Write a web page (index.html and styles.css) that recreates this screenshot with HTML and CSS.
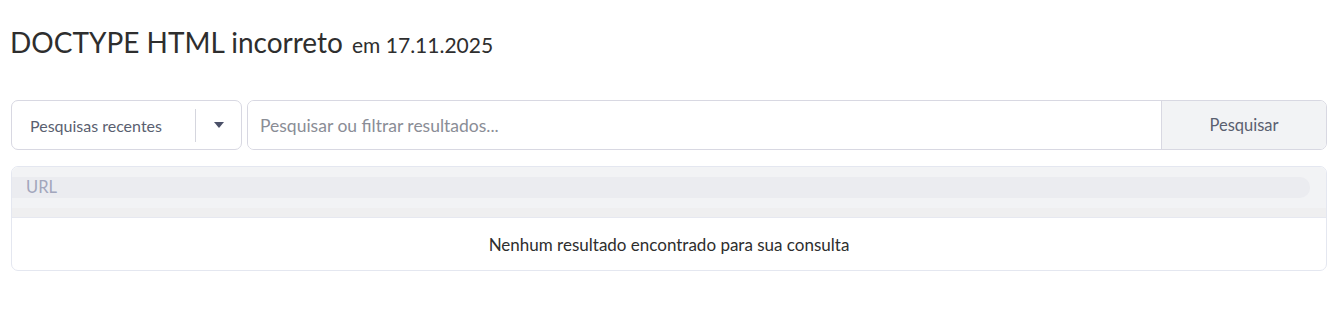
FILE: index.html
```html
<!DOCTYPE html>
<html lang="pt">
<head>
<meta charset="utf-8">
<title>DOCTYPE HTML incorreto</title>
<link rel="stylesheet" href="styles.css">
</head>
<body>
<div class="page">
  <h1 class="title">DOCTYPE HTML incorreto <span class="date">em 17.11.2025</span></h1>
  <div class="search-row">
    <div class="recent">
      <span class="recent-label">Pesquisas recentes</span>
      <span class="recent-sep"></span>
      <span class="recent-caret"><svg width="10" height="6" viewBox="0 0 10 6"><path d="M0 0h10L5 6z" fill="#4a5068"/></svg></span>
    </div>
    <div class="search">
      <input class="search-input" type="text" placeholder="Pesquisar ou filtrar resultados...">
      <button class="search-btn">Pesquisar</button>
    </div>
  </div>
  <div class="card">
    <div class="card-head">
      <div class="head-pill">URL</div>
    </div>
    <div class="head-strip"></div>
    <div class="card-body">Nenhum resultado encontrado para sua consulta</div>
  </div>
</div>
</body>
</html>
```
FILE: styles.css
```css
* { box-sizing: border-box; }
body {
  margin: 0;
  background: #fff;
  font-family: "Lato", "Open Sans", sans-serif;
  color: #2b2b2b;
}
.page {
  padding: 22px 11px 0 11px;
}
.title {
  margin: 0 0 0 -1px;
  font-weight: 400;
  font-size: 28px;
  line-height: 40px;
  color: #2e2e2e;
}
.date {
  font-size: 21px;
  margin-left: 2px;
}
.search-row {
  display: flex;
  gap: 5px;
  margin-top: 35px;
  height: 50px;
}
.recent {
  width: 231px;
  flex: none;
  display: flex;
  align-items: center;
  border: 1px solid #d8d8e2;
  border-radius: 7px;
  padding-left: 18px;
}
.recent-label {
  font-size: 16px;
  color: #5a5f70;
  flex: 1;
}
.recent-sep {
  width: 1px;
  height: 33px;
  background: #d5d6de;
}
.recent-caret {
  width: 45px;
  display: flex;
  justify-content: center;
  align-items: center;
}
.search {
  flex: 1;
  display: flex;
  border: 1px solid #d8d8e2;
  border-radius: 7px;
  overflow: hidden;
}
.search-input {
  flex: 1;
  border: 0;
  outline: 0;
  padding: 0 12px;
  font-family: inherit;
  font-size: 17.5px;
  color: #333;
  background: #fff;
}
.search-input::placeholder { color: #8a8d96; }
.search-btn {
  width: 165px;
  border: 0;
  border-left: 1px solid #d8d8e2;
  background: #f2f3f5;
  font-family: inherit;
  font-size: 16.5px;
  color: #5a5f70;
}
.card {
  margin-top: 16px;
  border: 1px solid #e4e7f0;
  border-radius: 7px;
  overflow: hidden;
}
.card-head {
  background: #f2f3f5;
  padding: 10px 16px 10px 0;
}
.head-pill {
  background: #ebecf0;
  border-radius: 0 10px 10px 0;
  height: 21px;
  line-height: 21px;
  padding-left: 14px;
  font-size: 16.5px;
  color: #a2a6bc;
}
.head-strip {
  height: 10px;
  background: #efeff0;
  border-bottom: 1px solid #e6e8f0;
}
.card-body {
  height: 52px;
  display: flex;
  align-items: center;
  justify-content: center;
  font-size: 17px;
  color: #2e2e2e;
}
```
